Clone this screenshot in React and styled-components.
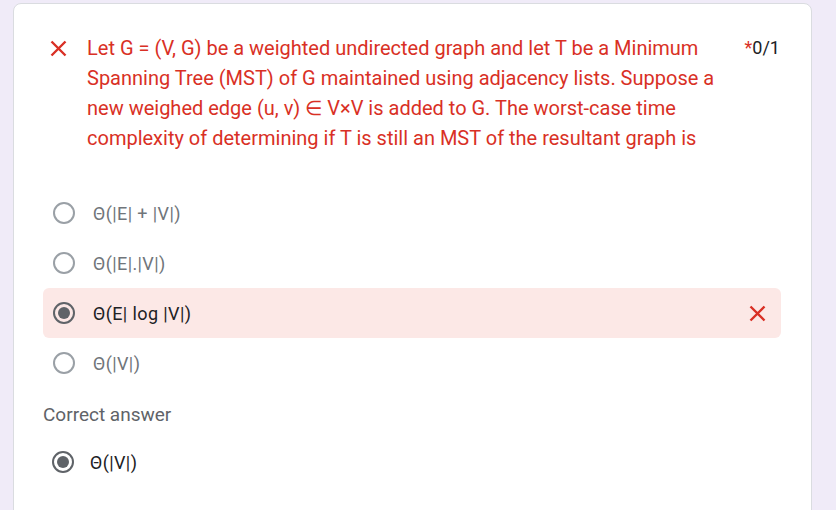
import styled, { createGlobalStyle } from 'styled-components';

const Global = createGlobalStyle`
  html, body {
    margin: 0;
    padding: 0;
    background: #f0ebf8;
    font-family: Roboto, "Liberation Sans", Arial, sans-serif;
  }
`;

const Page = styled.div`
  height: 510px;
  overflow: hidden;
  padding: 3px 24px 0 13px;
`;

const Card = styled.div`
  background: #fff;
  border: 1px solid #dadce0;
  border-radius: 8px;
  width: 797px;
  height: 600px;
  box-sizing: content-box;
`;

const Header = styled.div`
  display: flex;
  align-items: flex-start;
  padding: 29px 31px 0 31px;
`;

const IconBox = styled.div`
  width: 26px;
  height: 30px;
  display: flex;
  align-items: center;
  justify-content: center;
  flex-shrink: 0;
  margin-right: 16px;
`;

const Question = styled.div`
  flex: 1;
  color: #d93025;
  font-size: 20px;
  line-height: 30px;
  max-width: 640px;
`;

const Score = styled.div`
  margin-left: auto;
  font-size: 18px;
  line-height: 30px;
  color: #202124;
  span {
    color: #d93025;
  }
`;

const Options = styled.div`
  padding: 35px 30px 0 29px;
`;

const Row = styled.div`
  display: flex;
  align-items: center;
  height: 50px;
  padding: 0 15px 0 10px;
  border-radius: 6px;
  background: ${p => (p.$wrong ? '#fce8e6' : 'transparent')};
`;

const Radio = styled.div`
  width: 22px;
  height: 22px;
  box-sizing: border-box;
  border-radius: 50%;
  border: 2px solid ${p => (p.$checked ? '#5f6368' : '#9aa0a6')};
  display: flex;
  align-items: center;
  justify-content: center;
  flex-shrink: 0;
  &::after {
    content: '';
    display: ${p => (p.$checked ? 'block' : 'none')};
    width: 12px;
    height: 12px;
    border-radius: 50%;
    background: #5f6368;
  }
`;

const Label = styled.div`
  margin-left: 18px;
  font-size: 18px;
  letter-spacing: 0.4px;
  color: ${p => (p.$checked ? '#202124' : '#70757a')};
`;

const RowMark = styled.div`
  margin-left: auto;
  display: flex;
`;

const AnswerTitle = styled.div`
  padding: 16px 0 0 29px;
  font-size: 19px;
  line-height: 22px;
  color: #5f6368;
`;

const AnswerRow = styled(Row)`
  padding-left: 9px;
  margin: 11px 0 0 29px;
  ${Label} {
    margin-left: 16px;
  }
`;

const Cross = ({ size = 17 }) => (
  <svg width={size} height={size} viewBox="0 0 17 17">
    <path d="M1.5 1.5 L15.5 15.5 M15.5 1.5 L1.5 15.5" stroke="#d93025" strokeWidth="2.4" />
  </svg>
);

const options = ['Θ(|E| + |V|)', 'Θ(|E|.|V|)', 'Θ(E| log |V|)', 'Θ(|V|)'];
const chosen = 2;

export default function App() {
  return (
    <>
      <Global />
      <Page>
        <Card>
          <Header>
            <IconBox>
              <Cross />
            </IconBox>
            <Question>
              Let G = (V, G) be a weighted undirected graph and let T be a Minimum Spanning Tree (MST) of G
              maintained using adjacency lists. Suppose a new weighed edge (u, v) ∈ V×V is added to G. The
              worst-case time complexity of determining if T is still an MST of the resultant graph is
            </Question>
            <Score>
              <span>*</span>0/1
            </Score>
          </Header>
          <Options>
            {options.map((o, i) => (
              <Row key={o} $wrong={i === chosen}>
                <Radio $checked={i === chosen} />
                <Label $checked={i === chosen}>{o}</Label>
                {i === chosen && (
                  <RowMark>
                    <Cross />
                  </RowMark>
                )}
              </Row>
            ))}
          </Options>
          <AnswerTitle>Correct answer</AnswerTitle>
          <AnswerRow>
            <Radio $checked />
            <Label $checked>Θ(|V|)</Label>
          </AnswerRow>
        </Card>
      </Page>
    </>
  );
}
